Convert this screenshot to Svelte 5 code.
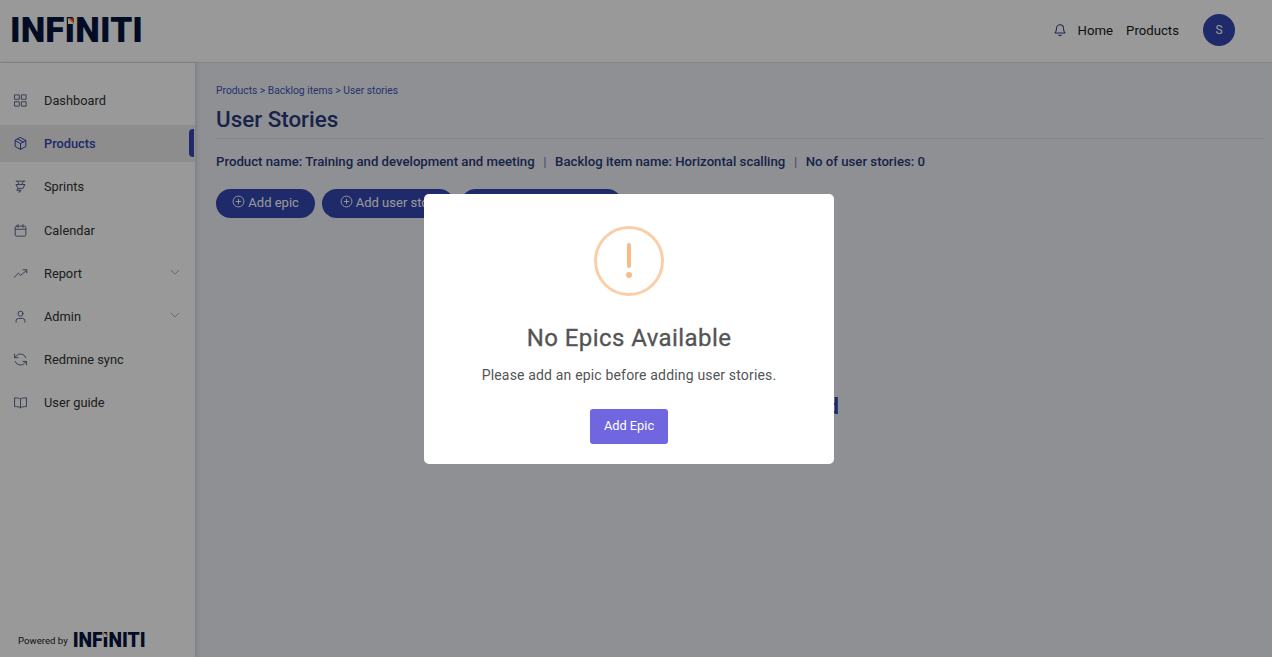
<script>
  const nav = [
    { label: "Dashboard", icon: "grid" },
    { label: "Products", icon: "box", active: true },
    { label: "Sprints", icon: "pin" },
    { label: "Calendar", icon: "calendar" },
    { label: "Report", icon: "trend", caret: true },
    { label: "Admin", icon: "user", caret: true },
    { label: "Redmine sync", icon: "sync" },
    { label: "User guide", icon: "book" },
  ];
</script>

<div class="page">
  <header class="topbar">
    <div class="logo">INFINITI<span class="spark"></span></div>
    <div class="top-right">
      <svg class="bell" viewBox="0 0 24 24" width="14" height="14" fill="none" stroke="#2f4190" stroke-width="1.8" stroke-linecap="round" stroke-linejoin="round">
        <path d="M6 9a6 6 0 0 1 12 0c0 6 2.500 8 2.500 8h-17S6 15 6 9" />
        <path d="M10 20.500a2.200 2.200 0 0 0 4 0" />
      </svg>
      <a class="top-link" href="#home">Home</a>
      <a class="top-link" href="#products">Products</a>
      <div class="avatar">S</div>
    </div>
  </header>

  <div class="body">
    <aside class="sidebar">
      <nav class="menu">
        {#each nav as item}
          <div class="menu-item" class:active={item.active}>
            <svg class="menu-icon" viewBox="0 0 24 24" width="15" height="15" fill="none" stroke="currentColor" stroke-width="1.6" stroke-linecap="round" stroke-linejoin="round">
              {#if item.icon === "grid"}
                <rect x="3" y="3" width="7" height="7" />
                <rect x="14" y="3" width="7" height="7" />
                <rect x="3" y="14" width="7" height="7" />
                <rect x="14" y="14" width="7" height="7" />
              {:else if item.icon === "box"}
                <path d="M12 2.500l8.500 4.700v9.600L12 21.500l-8.500-4.700V7.200z" />
                <path d="M3.500 7.200L12 12l8.500-4.800M12 12v9.500M7.800 4.900l8.500 4.800" />
              {:else if item.icon === "pin"}
                <path d="M5 3.500h14M7 3.500l3 5-5 .5h14l-5-.5 3-5M5 9l3 6h8l3-6M8 15l-2 3h7l-3 3.500V18" />
              {:else if item.icon === "calendar"}
                <rect x="3.500" y="5" width="17" height="16" rx="2" />
                <path d="M3.500 10h17M8 2.500V7M16 2.500V7" />
              {:else if item.icon === "trend"}
                <path d="M2 18l6.500-6.500 4 3.500L22 6.500M16 6h6v5" />
              {:else if item.icon === "user"}
                <circle cx="12" cy="7.500" r="4" />
                <path d="M5 21v-2.500A4 4 0 0 1 9 15h6a4 4 0 0 1 4 3.500V21" />
              {:else if item.icon === "sync"}
                <path d="M20.500 9A9 9 0 0 0 5 6.500L2.500 9M3.500 15A9 9 0 0 0 19 17.500l2.500-2.500" />
                <path d="M2.500 3.500V9H8M21.500 20.500V15H16" />
              {:else}
                <path d="M12 6.500C10 5 7 4.500 2.500 4.500v14c4.500 0 7.500.5 9.500 2 2-1.500 5-2 9.500-2v-14C17 4.500 14 5 12 6.500zM12 6.500v14" />
              {/if}
            </svg>
            <span class="menu-label">{item.label}</span>
            {#if item.caret}
              <svg class="caret" viewBox="0 0 12 7" width="10" height="6" fill="none" stroke="currentColor" stroke-width="0.9"><path d="M1 1l5 5 5-5" /></svg>
            {/if}
            {#if item.active}<span class="marker"></span>{/if}
          </div>
        {/each}
      </nav>
      <div class="powered">
        <span class="powered-text">Powered by</span>
        <span class="logo small">INFINITI<span class="spark"></span></span>
      </div>
    </aside>

    <main class="content">
      <div class="crumbs">Products &gt; Backlog items &gt; User stories</div>
      <h1 class="title">User Stories</h1>
      <div class="meta">
        <span>Product name: Training and development and meeting</span>
        <span class="sep">|</span>
        <span>Backlog item name: Horizontal scalling</span>
        <span class="sep">|</span>
        <span>No of user stories: 0</span>
      </div>
      <div class="actions">
        <button class="pill add-epic">
          <svg viewBox="0 0 24 24" width="13" height="13" fill="none" stroke="currentColor" stroke-width="1.800"><circle cx="12" cy="12" r="10" /><path d="M12 7v10M7 12h10" /></svg>
          Add epic
        </button>
        <button class="pill add-story">
          <svg viewBox="0 0 24 24" width="13" height="13" fill="none" stroke="currentColor" stroke-width="1.800"><circle cx="12" cy="12" r="10" /><path d="M12 7v10M7 12h10" /></svg>
          Add user story
        </button>
        <button class="pill third"></button>
      </div>
      <div class="empty">No data found</div>
    </main>
  </div>

  <div class="backdrop">
    <div class="dialog">
      <div class="warn"><span class="warn-bar"></span><span class="warn-dot"></span></div>
      <h2 class="dialog-title">No Epics Available</h2>
      <p class="dialog-text">Please add an epic before adding user stories.</p>
      <button class="confirm">Add Epic</button>
    </div>
  </div>
</div>

<style>
  :global(body) {
    margin: 0;
    font-family: Roboto, "Liberation Sans", sans-serif;
  }

  .page {
    height: 657px;
    overflow: hidden;
    display: flex;
    flex-direction: column;
    background: #eef0f7;
  }

  .topbar {
    height: 62px;
    flex: none;
    background: #fff;
    border-bottom: 1px solid #ddd;
    display: flex;
    align-items: center;
    justify-content: space-between;
    padding-left: 10px;
    padding-right: 37px;
  }

  .logo {
    position: relative;
    font-family: Roboto, sans-serif;
    font-weight: 900;
    font-size: 35px;
    line-height: 32px;
    letter-spacing: 0.1px;
    color: #04163f;
  }

  .spark {
    position: absolute;
    left: 58px;
    top: 3px;
    width: 6px;
    height: 6px;
    background: linear-gradient(225deg, #d93a2b 0 35%, #f2b632 35% 50%, #fff 50%);
  }

  .top-right {
    display: flex;
    align-items: center;
    font-size: 13.200px;
    padding-bottom: 2px;
  }

  .bell {
    margin-right: 11px;
  }

  .top-link {
    color: #1a1a1a;
    text-decoration: none;
    margin-right: 13px;
  }

  .avatar {
    width: 32px;
    height: 32px;
    margin-left: 11px;
    border-radius: 50%;
    background: #3347b0;
    color: #fff;
    font-size: 12px;
    display: flex;
    align-items: center;
    justify-content: center;
  }

  .body {
    flex: 1;
    display: flex;
    min-height: 0;
  }

  .sidebar {
    width: 195px;
    flex: none;
    background: #fff;
    box-shadow: 2px 0 4px rgba(0, 0, 0, 0.12);
    display: flex;
    flex-direction: column;
    justify-content: space-between;
  }

  .menu {
    padding-top: 19.100px;
    display: flex;
    flex-direction: column;
    gap: 6.150px;
  }

  .menu-item {
    position: relative;
    height: 37px;
    display: flex;
    align-items: center;
    padding-left: 13px;
    color: #5d6b8f;
    font-size: 12.800px;
  }

  .menu-item.active {
    background: #ebebeb;
    color: #3347b0;
  }

  .menu-label {
    margin-left: 16px;
    color: #333;
  }

  .active .menu-label {
    color: #3347b0;
    font-weight: 500;
  }

  .caret {
    position: absolute;
    right: 15px;
    top: 14px;
    color: #8b95ad;
  }

  .marker {
    position: absolute;
    right: 1px;
    top: 4px;
    width: 5px;
    height: 28px;
    border-radius: 4px 0 0 4px;
    background: #3347b0;
  }

  .powered {
    display: flex;
    align-items: center;
    padding: 0 0 6px 18px;
    height: 20px;
  }

  .powered-text {
    font-size: 9.600px;
    color: #222;
    margin-right: 5px;
    padding-bottom: 1px;
  }

  .logo.small {
    font-size: 19.300px;
    line-height: 18px;
    letter-spacing: 0;
  }

  .logo.small .spark {
    left: 31px;
    top: 1px;
    width: 3px;
    height: 4px;
  }

  .content {
    flex: 1;
    min-width: 0;
    padding: 22px 7px 0 21px;
  }

  .crumbs {
    font-size: 10.300px;
    line-height: 12px;
    color: #3f55b8;
  }

  .title {
    margin: 7px 0 0;
    padding-bottom: 4px;
    font-size: 22.400px;
    line-height: 30px;
    font-weight: 500;
    color: #2a3a78;
    border-bottom: 1px solid #dcdee6;
  }

  .meta {
    margin-top: 15px;
    font-size: 13.200px;
    line-height: 16px;
    font-weight: 500;
    color: #2a3a78;
    display: flex;
  }

  .sep {
    margin: 0 8.600px;
    font-weight: 400;
    color: #6d7cc0;
  }

  .actions {
    margin-top: 19px;
    display: flex;
    gap: 7px;
  }

  .pill {
    height: 29px;
    border: none;
    border-radius: 15px;
    background: #3347b0;
    color: #fff;
    font-family: inherit;
    font-size: 13px;
    padding: 0 0 3px;
    white-space: nowrap;
    overflow: hidden;
  }

  .add-epic { width: 99px; }
  .add-story { width: 132px; padding-left: 3px; }
  .third { width: 161px; }

  .pill svg {
    vertical-align: -1px;
  }

  .empty {
    margin-top: 176px;
    padding-right: 426px;
    text-align: right;
    font-size: 22px;
    line-height: 26px;
    font-weight: 700;
    color: #3347b0;
  }

  .backdrop {
    position: fixed;
    inset: 0;
    background: rgba(0, 0, 0, 0.4);
    display: flex;
    align-items: center;
    justify-content: center;
    padding-right: 14px;
    box-sizing: border-box;
  }

  .dialog {
    width: 410px;
    height: 270px;
    margin-top: 1px;
    box-sizing: border-box;
    background: #fff;
    border-radius: 5px;
    padding-top: 32px;
    display: flex;
    flex-direction: column;
    align-items: center;
    color: #545454;
  }

  .warn {
    position: relative;
    width: 70px;
    height: 70px;
    box-sizing: border-box;
    border: 3px solid #facea8;
    border-radius: 50%;
  }

  .warn-bar {
    position: absolute;
    left: 30px;
    top: 14px;
    width: 4px;
    height: 25px;
    background: #f8bb86;
    border-radius: 2px;
  }

  .warn-dot {
    position: absolute;
    left: 29px;
    top: 43px;
    width: 6px;
    height: 6px;
    background: #f8bb86;
    border-radius: 50%;
  }

  .dialog-title {
    margin: 27px 0 0;
    font-size: 24px;
    line-height: 30px;
    font-weight: 400;
    letter-spacing: 0.430px;
    -webkit-text-stroke: 0.3px #545454;
  }

  .dialog-text {
    margin: 12px 0 0;
    font-size: 14px;
    line-height: 20px;
    letter-spacing: 0.170px;
  }

  .confirm {
    margin-top: 24px;
    width: 78px;
    height: 35px;
    border: none;
    border-radius: 3px;
    background: #7066e0;
    color: #fff;
    font-family: inherit;
    font-size: 12.800px;
    padding: 0 0 2px;
  }
</style>
